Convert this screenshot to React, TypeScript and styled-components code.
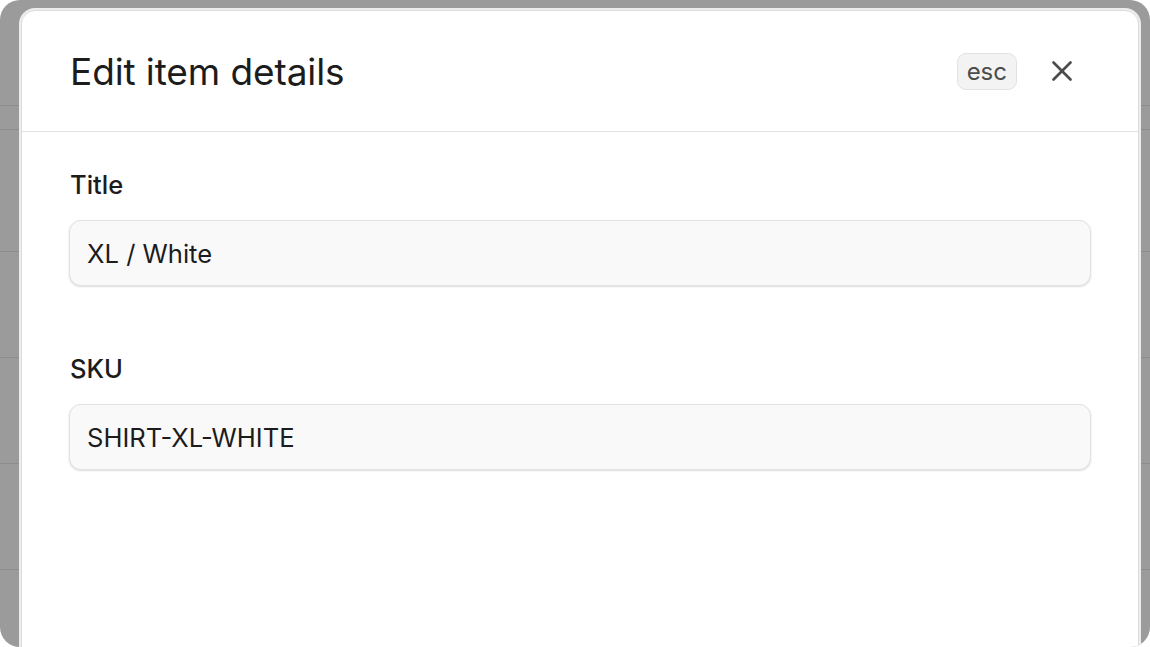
import React from 'react';
import styled, { createGlobalStyle } from 'styled-components';
import { X } from 'lucide-react';

const GlobalStyle = createGlobalStyle`
  html, body {
    margin: 0;
    padding: 0;
    background: #ffffff;
  }
  body {
    font-family: Inter, "Noto Sans", "Liberation Sans", sans-serif;
    -webkit-font-smoothing: antialiased;
  }
`;

interface FieldProps {
  label: string;
  value: string;
}

function Field(props: FieldProps) {
  return (
    <FieldWrap>
      <Label>{props.label}</Label>
      <Input defaultValue={props.value} />
    </FieldWrap>
  );
}

function App() {
  return (
    <>
      <GlobalStyle />
      <Backdrop>
        <Modal>
          <Header>
            <Heading>Edit item details</Heading>
            <Actions>
              <Kbd>esc</Kbd>
              <CloseButton aria-label="Close">
                <X size={34} strokeWidth={1.9} />
              </CloseButton>
            </Actions>
          </Header>
          <Body>
            <Field label="Title" value="XL / White" />
            <Field label="SKU" value="SHIRT-XL-WHITE" />
          </Body>
        </Modal>
      </Backdrop>
    </>
  );
}

// faint row borders of the page behind the overlay
const rowLine = (y: number) =>
  `linear-gradient(#8d8d8d, #8d8d8d) 0 ${y}px / 100% 1px no-repeat`;

const Backdrop = styled.div`
  width: 1150px;
  height: 647px;
  box-sizing: border-box;
  border-radius: 20px;
  overflow: hidden;
  padding: 10px 11px 0 21px;
  background: ${[105, 129, 251, 357, 463, 569].map(rowLine).join(', ')}, #9b9b9b;
`;

const Modal = styled.div`
  height: 680px;
  background: #ffffff;
  border-radius: 14px;
  border: 1px solid #dcdcdc;
  box-shadow: 0 0 0 2px #ededed;
  display: flex;
  flex-direction: column;
`;

const Header = styled.div`
  height: 120px;
  display: flex;
  align-items: center;
  justify-content: space-between;
  padding: 0 56px 0 48px;
  border-bottom: 1px solid #e2e2e2;
`;

const Heading = styled.h1`
  margin: 0;
  font-size: 37px;
  font-weight: 400;
  color: #1c1c1c;
  letter-spacing: -0.1px;
`;

const Actions = styled.div`
  display: flex;
  align-items: center;
  gap: 25px;
`;

const Kbd = styled.kbd`
  font-family: Inter, "Noto Sans", sans-serif;
  font-size: 24px;
  color: #4c4c4c;
  background: #f3f3f3;
  border: 1px solid #e2e2e2;
  border-radius: 9px;
  height: 37px;
  padding: 0 9px;
  box-sizing: border-box;
  display: flex;
  align-items: center;
`;

const CloseButton = styled.button`
  width: 40px;
  height: 40px;
  padding: 0;
  border: none;
  background: none;
  color: #4c4c4c;
  display: flex;
  align-items: center;
  justify-content: center;
`;

const Body = styled.div`
  padding: 37px 47px 0 47px;
  display: flex;
  flex-direction: column;
  gap: 67px;
`;

const FieldWrap = styled.div`
  display: flex;
  flex-direction: column;
  gap: 20px;
`;

const Label = styled.label`
  font-size: 25.5px;
  font-weight: 500;
  line-height: 31px;
  color: #1c1c1c;
  padding-left: 1px;
`;

const Input = styled.input`
  height: 66px;
  box-sizing: border-box;
  border: 1px solid #e1e1e1;
  border-radius: 12px;
  background: #f9f9f9;
  box-shadow: 0 1px 2px rgba(0, 0, 0, 0.14);
  padding: 0 17px;
  font-family: Inter, "Noto Sans", sans-serif;
  font-size: 25.6px;
  color: #1c1c1c;
  outline: none;
`;

export default App;
